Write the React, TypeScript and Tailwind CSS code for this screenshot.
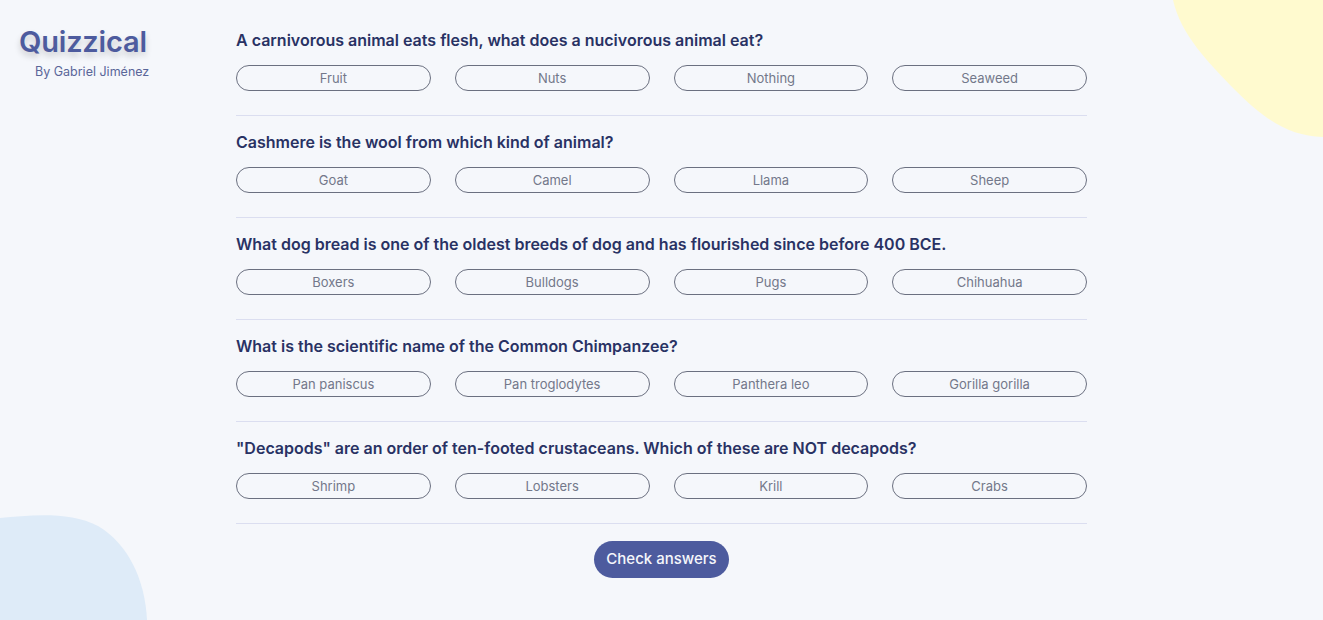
import React from "react";

const questions = [
  {
    q: "A carnivorous animal eats flesh, what does a nucivorous animal eat?",
    a: ["Fruit", "Nuts", "Nothing", "Seaweed"],
  },
  {
    q: "Cashmere is the wool from which kind of animal?",
    a: ["Goat", "Camel", "Llama", "Sheep"],
  },
  {
    q: "What dog bread is one of the oldest breeds of dog and has flourished since before 400 BCE.",
    a: ["Boxers", "Bulldogs", "Pugs", "Chihuahua"],
  },
  {
    q: "What is the scientific name of the Common Chimpanzee?",
    a: ["Pan paniscus", "Pan troglodytes", "Panthera leo", "Gorilla gorilla"],
  },
  {
    q: "\"Decapods\" are an order of ten-footed crustaceans. Which of these are NOT decapods?",
    a: ["Shrimp", "Lobsters", "Krill", "Crabs"],
  },
];

export default function App() {
  return (
    <div
      className="relative min-h-[620px] w-full overflow-hidden bg-[#F5F7FB]"
      style={{ fontFamily: "Inter, 'Liberation Sans', sans-serif" }}
    >
      <svg className="absolute top-0 right-0" width="150" height="140" viewBox="0 0 150 140">
        <path d="M0,0 C8,35 35,62 62,90 C90,118 115,136 150,137 L150,0 Z" fill="#FFFACF" />
      </svg>
      <svg className="absolute bottom-0 left-0" width="150" height="106" viewBox="0 0 150 106">
        <path d="M0,4 C30,1 70,-3 98,12 C128,30 145,65 147,106 L0,106 Z" fill="#DEEBF8" />
      </svg>

      <div className="relative flex">
        <div className="w-[236px] shrink-0 pl-[19px] pt-[24px]">
          <h1 className="text-[29px] font-semibold leading-[36px] tracking-[-0.2px] text-[#4D5B9E] [text-shadow:0_4px_6px_rgba(0,0,0,0.18)]">
            Quizzical
          </h1>
          <p className="mt-[4px] pl-[16px] text-[12.5px] leading-[16px] text-[#5A6699]">By Gabriel Jiménez</p>
        </div>

        <div className="w-[851px] pt-[14px]">
          {questions.map((item, i) => (
            <div key={i} className="border-b border-[#DBDEF0] pt-[14px] pb-[24px]">
              <h2 className="text-[16px] font-semibold leading-[24px] text-[#293264]">{item.q}</h2>
              <div className="mt-[13px] grid grid-cols-4 gap-x-[24px]">
                {item.a.map((ans) => (
                  <button
                    key={ans}
                    className="h-[26px] rounded-full border border-[#6B7080] text-[13px] leading-[24px] text-[#73788A]"
                  >
                    {ans}
                  </button>
                ))}
              </div>
            </div>
          ))}
          <div className="flex justify-center pt-[17px]">
            <button className="h-[37px] w-[135px] rounded-full bg-[#4D5B9E] text-[15px] font-medium text-[#F5F7FB]">
              Check answers
            </button>
          </div>
        </div>
      </div>
    </div>
  );
}
